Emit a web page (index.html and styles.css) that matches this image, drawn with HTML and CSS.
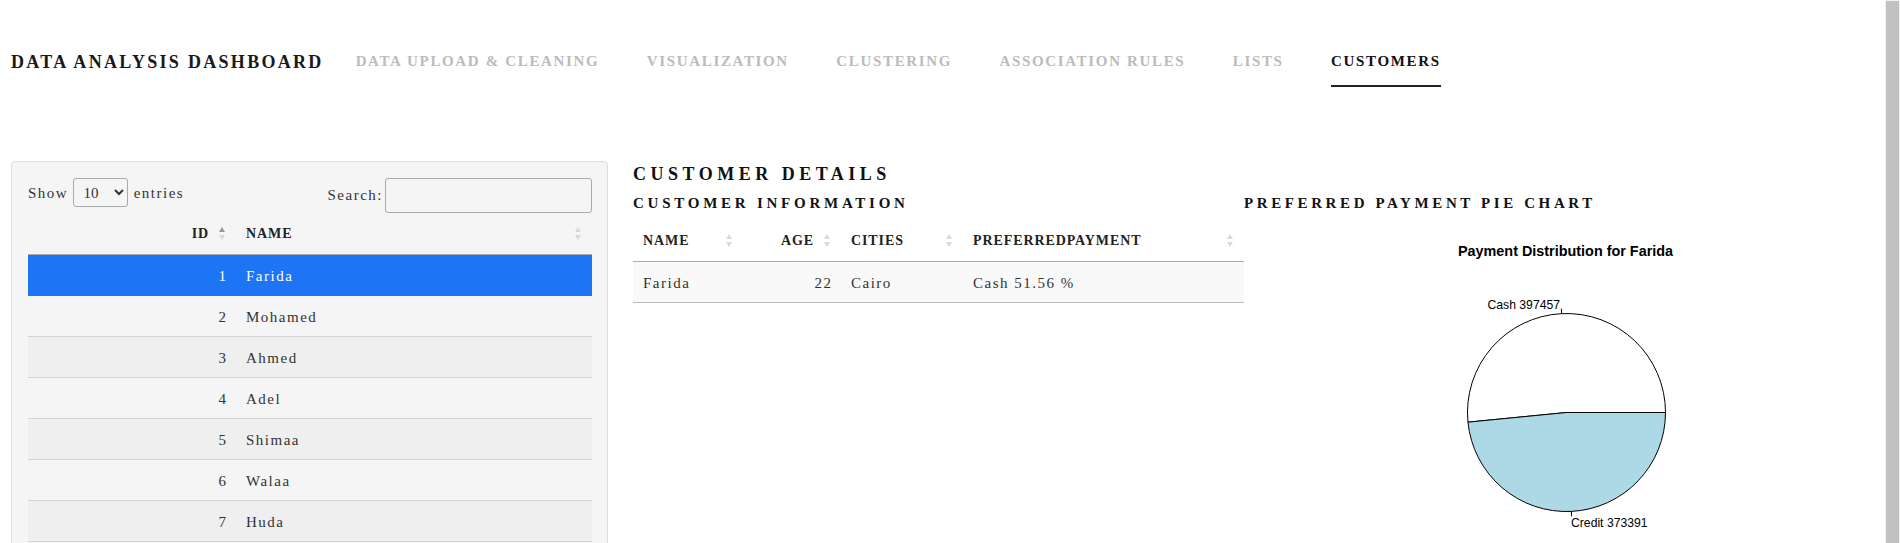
FILE: index.html
```html
<!DOCTYPE html>
<html lang="en">
<head>
<meta charset="utf-8">
<title>Data Analysis Dashboard</title>
<link rel="stylesheet" href="styles.css">
</head>
<body>
<div class="app">
  <div class="page">
    <nav class="navbar">
      <span class="brand">Data Analysis Dashboard</span>
      <ul class="tabs">
        <li class="tab">Data Upload &amp; Cleaning</li>
        <li class="tab">Visualization</li>
        <li class="tab">Clustering</li>
        <li class="tab">Association Rules</li>
        <li class="tab">Lists</li>
        <li class="tab active">Customers</li>
      </ul>
    </nav>

    <div class="content">
      <aside class="well">
        <div class="dt-top">
          <label class="dt-length">Show <select><option>10</option><option>25</option><option>50</option><option>100</option></select> entries</label>
          <label class="dt-search">Search:<input type="search"></label>
        </div>
        <table class="dt list">
          <thead>
            <tr><th class="num sort asc w-id">ID</th><th class="sort">Name</th></tr>
          </thead>
          <tbody>
            <tr class="selected"><td class="num">1</td><td>Farida</td></tr>
            <tr><td class="num">2</td><td>Mohamed</td></tr>
            <tr><td class="num">3</td><td>Ahmed</td></tr>
            <tr><td class="num">4</td><td>Adel</td></tr>
            <tr><td class="num">5</td><td>Shimaa</td></tr>
            <tr><td class="num">6</td><td>Walaa</td></tr>
            <tr><td class="num">7</td><td>Huda</td></tr>
          </tbody>
        </table>
      </aside>

      <main class="main">
        <h3>Customer Details</h3>
        <div class="cols">
          <section class="col-info">
            <h4>Customer Information</h4>
            <table class="dt info">
              <thead>
                <tr>
                  <th class="sort w-name">Name</th>
                  <th class="num sort w-age">Age</th>
                  <th class="sort w-cities">Cities</th>
                  <th class="sort">PreferredPayment</th>
                </tr>
              </thead>
              <tbody>
                <tr><td>Farida</td><td class="num">22</td><td>Cairo</td><td>Cash 51.56 %</td></tr>
              </tbody>
            </table>
          </section>
          <section class="col-chart">
            <h4>Preferred Payment Pie Chart</h4>
            <svg class="pie" width="641" height="330" viewBox="0 0 641 330">
              <text class="pie-title" x="321.5" y="36" text-anchor="middle">Payment Distribution for Farida</text>
              <path class="slice cash" d="M322.5 192.5 L421.5 192.5 A99 99 0 1 0 223.97 202.16 Z"/>
              <path class="slice credit" d="M322.5 192.5 L223.97 202.16 A99 99 0 0 0 421.5 192.5 Z"/>
              <line class="tick" x1="317.66" y1="93.62" x2="317.42" y2="88.67"/>
              <text class="pie-label" x="316" y="89" text-anchor="end">Cash 397457</text>
              <line class="tick" x1="327.34" y1="291.38" x2="327.58" y2="296.33"/>
              <text class="pie-label" x="327" y="306.5">Credit 373391</text>
            </svg>
          </section>
        </div>
      </main>
    </div>
  </div>
  <div class="scrollbar"><div class="thumb"></div></div>
</div>
</body>
</html>
```

FILE: styles.css
```css
* { box-sizing: border-box; }

html, body {
  margin: 0;
  height: 100%;
  overflow: hidden;
  background: #fff;
}

body {
  font-family: "Liberation Serif", "Times New Roman", serif;
  font-size: 15px;
  color: #333;
}

.app {
  display: flex;
  height: 100vh;
}

.page {
  flex: 1;
  min-width: 0;
  padding-left: 11px;
}

.scrollbar {
  width: 15px;
  flex: none;
  background: #f1f1f1;
  padding: 1px 1px 0 1px;
  display: flex;
}

.thumb {
  flex: 1;
  background: #c1c1c1;
}

/* navbar */
.navbar {
  display: flex;
  align-items: flex-start;
  padding-top: 50px;
}

.brand {
  font-size: 18px;
  font-weight: bold;
  line-height: 24px;
  letter-spacing: 2.3px;
  text-transform: uppercase;
  color: #1a1a1a;
  margin-right: 32px;
}

.tabs {
  display: flex;
  gap: 47.5px;
  list-style: none;
  margin: 1px 0 0;
  padding: 0;
}

.tab {
  font-size: 15px;
  font-weight: bold;
  letter-spacing: 1.65px;
  line-height: 20px;
  text-transform: uppercase;
  color: #bbb;
  padding-bottom: 14px;
  border-bottom: 2px solid transparent;
}

.tab.active {
  color: #111;
  border-bottom-color: #222;
}

/* content */
.content {
  display: flex;
  align-items: flex-start;
  margin-top: 74px;
}

.well {
  width: 597px;
  flex: none;
  background: #f5f5f5;
  border: 1px solid #dedede;
  border-radius: 4px;
  padding: 16px 15px 16px 16px;
}

.dt-top {
  display: flex;
  justify-content: space-between;
  align-items: flex-start;
  letter-spacing: 1.5px;
}

.dt-length select {
  width: 55px;
  height: 29px;
  padding: 4px 4px 4px 5px;
  border: 1px solid #aaa;
  border-radius: 3px;
  background: transparent;
  font-family: inherit;
  font-size: 15px;
  letter-spacing: 0;
  color: #333;
}

.dt-search input {
  width: 207px;
  height: 35px;
  margin-left: 2px;
  padding: 5px;
  border: 1px solid #aaa;
  border-radius: 3px;
  background: transparent;
  font-family: inherit;
  font-size: 15px;
}

/* tables */
.dt {
  width: 100%;
  table-layout: fixed;
  border-collapse: separate;
  border-spacing: 0;
}

.dt th {
  position: relative;
  padding: 10px 27px 10px 10px;
  line-height: 21px;
  font-size: 14px;
  font-weight: bold;
  letter-spacing: 0.9px;
  text-transform: uppercase;
  text-align: left;
  color: #222;
  border-bottom: 1px solid #aaa;
}

.dt td {
  padding: 11px 10px 9px;
  line-height: 20px;
  letter-spacing: 1.5px;
  color: #333;
  border-bottom: 1px solid #d3d3d3;
  white-space: nowrap;
}

.dt .num { text-align: right; }
.dt td.num { padding-right: 8.5px; }

.dt th.sort::before,
.dt th.sort::after {
  content: "";
  position: absolute;
  right: 11px;
  width: 0;
  height: 0;
  border-left: 3.5px solid transparent;
  border-right: 3.5px solid transparent;
}

.dt th.sort::before {
  top: calc(50% - 7px);
  border-bottom: 5px solid #d9d9d9;
}

.dt th.sort::after {
  top: calc(50% + 1px);
  border-top: 5px solid #d9d9d9;
}

.dt th.asc::before { border-bottom-color: #999; }

.w-id { width: 208px; }
.w-name { width: 110px; }
.w-age { width: 98px; }
.w-cities { width: 122px; }

.list tbody tr:nth-child(odd) td { background: #efefef; }

.list tbody tr.selected td {
  background: #1d74f5;
  color: #fff;
  border-bottom-color: #1d74f5;
}

.info tbody td {
  background: #f9f9f9;
  border-bottom-color: #bbb;
}

/* main panel */
.main {
  flex: 1;
  min-width: 0;
  margin-left: 25px;
  padding-top: 2px;
}

.main h3 {
  margin: 0;
  font-size: 18px;
  line-height: 22px;
  font-weight: bold;
  letter-spacing: 0.25em;
  text-transform: uppercase;
  color: #111;
}

.cols {
  display: flex;
  margin-top: 9px;
}

.col-info {
  width: 611px;
  flex: none;
}

.col-chart {
  flex: 1;
  min-width: 0;
}

.cols h4 {
  margin: 0 0 8px;
  font-size: 15px;
  line-height: 18px;
  font-weight: bold;
  letter-spacing: 0.25em;
  text-transform: uppercase;
  color: #111;
  white-space: nowrap;
}

.col-chart h4 { letter-spacing: 3.6px; }

/* pie chart */
.pie { display: block; }

.pie-title {
  font-family: "Liberation Sans", Arial, sans-serif;
  font-size: 14.4px;
  font-weight: bold;
  fill: #000;
}

.pie-label {
  font-family: "Liberation Sans", Arial, sans-serif;
  font-size: 12.2px;
  fill: #000;
}

.slice {
  stroke: #000;
  stroke-width: 1;
}

.slice.cash { fill: #fff; }
.slice.credit { fill: #add8e6; }

.tick {
  stroke: #000;
  stroke-width: 1;
}
```
